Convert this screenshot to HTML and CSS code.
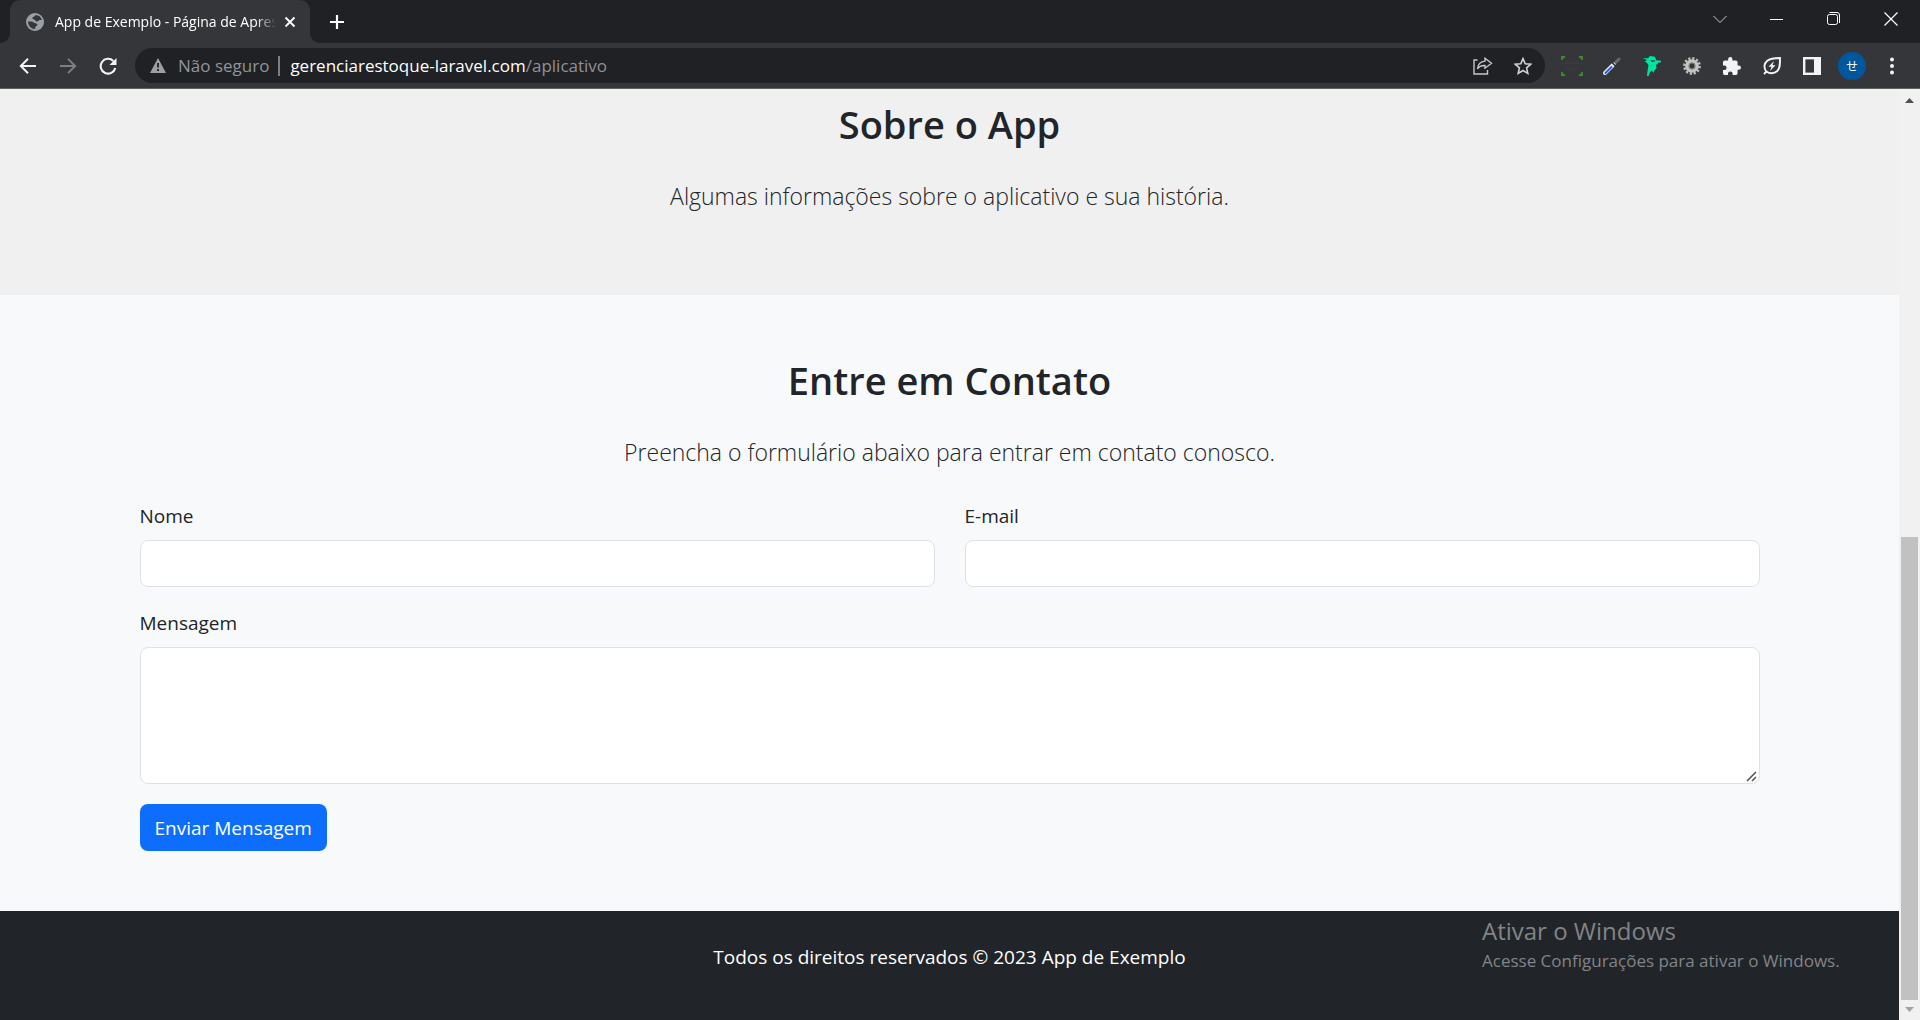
FILE: index.html
```html
<!DOCTYPE html>
<html lang="pt-BR">
<head>
<meta charset="utf-8">
<meta name="viewport" content="width=device-width, initial-scale=1">
<title>App de Exemplo - Página de Apresentação</title>
<link rel="stylesheet" href="styles.css">
</head>
<body>
<div class="window">
  <header class="chrome">
    <div class="tabstrip">
      <div class="tab">
        <svg class="favicon" width="18" height="18" viewBox="0 0 18 18"><circle cx="9" cy="9" r="9" fill="#9aa0a6"/><path d="M9.500 2c-.5 2-3 1.500-3 3.200 0 1.800 2.500.8 3 2.300.4 1.300 2.500 1.200 3 .2.300-.7 1.200-.7 3.400-.7A7 7 0 0 0 9.500 2zM2 8.500c2.500-.3 5 .2 6.200 1.300 1 1 3.300.6 3.300 2 0 1.300-1.500 1-2 2-.3.800 0 1.500-.5 2.200A7 7 0 0 1 2 8.500z" fill="#35363a"/></svg>
        <span class="tab-title">App de Exemplo - Página de Apresentação</span>
        <button class="icon-btn tab-close" aria-label="Fechar guia"><svg width="12" height="12" viewBox="0 0 12 12"><path d="M1.500 1.500l9 9M10.500 1.500l-9 9" stroke="#fff" stroke-width="1.900"/></svg></button>
      </div>
      <button class="icon-btn new-tab" aria-label="Nova guia"><svg width="16" height="16" viewBox="0 0 16 16"><path d="M8 1v14M1 8h14" stroke="#fff" stroke-width="2.200"/></svg></button>
      <div class="window-controls">
        <button class="icon-btn" aria-label="Pesquisar guias"><svg width="14" height="14" viewBox="0 0 14 14"><path d="M.5 4L7 10.500 13.500 4" fill="none" stroke="#ccc" stroke-width="1"/></svg></button>
        <button class="icon-btn" aria-label="Minimizar"><svg width="14" height="14" viewBox="0 0 14 14"><path d="M0 7.500h13" stroke="#fff" stroke-width="1"/></svg></button>
        <button class="icon-btn" aria-label="Restaurar"><svg width="14" height="14" viewBox="0 0 14 14" fill="none" stroke="#fff"><rect x=".5" y="2.500" width="10" height="10" rx="2"/><path d="M2.500.5H10A2.500 2.500 0 0 1 12.500 3v8"/></svg></button>
        <button class="icon-btn" aria-label="Fechar"><svg width="14" height="14" viewBox="0 0 14 14"><path d="M.5.5l13 13M13.500.5l-13 13" stroke="#fff" stroke-width="1.200"/></svg></button>
      </div>
    </div>
    <div class="toolbar">
      <div class="nav">
        <button class="icon-btn" aria-label="Voltar"><svg width="18" height="18" viewBox="0 0 18 18"><path d="M17 9H2M9 1.800L1.800 9 9 16.200" fill="none" stroke="#f1f3f4" stroke-width="2"/></svg></button>
        <button class="icon-btn" aria-label="Avançar"><svg width="18" height="18" viewBox="0 0 18 18"><path d="M1 9h15M9 1.800L16.200 9 9 16.200" fill="none" stroke="#7e8084" stroke-width="1.800"/></svg></button>
        <button class="icon-btn" aria-label="Recarregar"><svg width="18" height="18" viewBox="0 0 18 18"><path d="M16.300 11A7.400 7.400 0 1 1 14.300 3.900" fill="none" stroke="#f1f3f4" stroke-width="2.100"/><path d="M17.500 1v7h-7z" fill="#f1f3f4"/></svg></button>
      </div>
      <div class="address">
        <svg class="warn" width="16" height="15" viewBox="0 0 16 15"><path d="M8 0l8 15H0z" fill="#9aa0a6"/><path d="M8 5v4.500M8 11v2" stroke="#202124" stroke-width="1.800"/></svg>
        <span class="security">Não seguro</span>
        <span class="sep"></span>
        <span class="url" role="textbox" contenteditable="true" spellcheck="false" aria-label="Barra de endereço">gerenciarestoque-laravel.com<span class="path">/aplicativo</span></span>
        <button class="icon-btn" aria-label="Compartilhar"><svg width="20" height="18" viewBox="0 0 20 18" fill="none" stroke="#c4c6c9" stroke-width="1.400"><path d="M4.500 3H1v14h13.500v-4"/><path d="M12 1.200l6.500 5-6.500 5V8.500c-3.500-.1-6 .8-7.500 3.300.4-4.500 3-7.300 7.500-7.700z"/></svg></button>
        <button class="icon-btn" aria-label="Favoritar"><svg width="18" height="18" viewBox="0 0 18 18"><path d="M9 1.600l2.200 5.100 5.600.5-4.200 3.700 1.200 5.500L9 13.500l-4.800 2.900 1.200-5.500L1.200 7.200l5.600-.5z" fill="none" stroke="#d0d2d5" stroke-width="1.600"/></svg></button>
      </div>
      <div class="extensions">
        <button class="icon-btn" aria-label="Captura de tela"><svg width="22" height="20" viewBox="0 0 22 20" fill="none"><path d="M4 7h14M4 13h14" stroke="#3d3e40"/><path d="M1 4V1h3M18 1h3v3M21 16v3h-3M4 19H1v-3" stroke="#3b8f28" stroke-width="1.800"/></svg></button>
        <button class="icon-btn" aria-label="Conta-gotas"><svg width="18" height="18" viewBox="0 0 18 18" stroke-linecap="round"><path d="M10 8l6-6" stroke="#6b6763" stroke-width="3"/><path d="M2 16l8.500-8.500" stroke="#e4e7f2" stroke-width="4"/><path d="M2.500 16l6-6" stroke="#2f5fd0" stroke-width="2"/><path d="M9 5.500l3.500 3.500" stroke="#2a2a2c" stroke-width="1.500"/></svg></button>
        <button class="icon-btn" aria-label="Extensão ninja"><svg width="18" height="20" viewBox="0 0 18 20"><path d="M0 2l5 .2L7 0l5 .8 1.200 3.500 4.800.5v1.500l-3 .5-.5 2-1.500-.5.5 4-2.300 2.400L10.500 17 9 14.500 7 16l-1.500 4H4l.5-5 1-6L3 6l-1.500-.5L4 4z" fill="#00e5a0"/><path d="M7.500 4.500l4.500-.3v1.300l-3.500.3z" fill="#35363a"/></svg></button>
        <button class="icon-btn" aria-label="Extensão engrenagem"><svg width="18" height="18" viewBox="0 0 18 18" fill="none"><circle cx="9" cy="9" r="7.600" stroke="#bdbdbb" stroke-width="2.600" stroke-dasharray="2.200 1.780"/><circle cx="9" cy="9" r="5" stroke="#c4c4c2" stroke-width="3.600"/><circle cx="9" cy="9" r="3" stroke="#85827f" stroke-width="1.200"/></svg></button>
        <button class="icon-btn" aria-label="Extensões"><svg width="18" height="18" viewBox="2 1 21 21"><path d="M20.500 11H19V7a2 2 0 0 0-2-2h-4V3.500a2.500 2.500 0 0 0-5 0V5H4a2 2 0 0 0-2 2v3.800h1.500a2.700 2.700 0 0 1 0 5.400H2V20a2 2 0 0 0 2 2h3.800v-1.500a2.700 2.700 0 0 1 5.400 0V22H17a2 2 0 0 0 2-2v-4h1.500a2.500 2.500 0 0 0 0-5z" fill="#f1f3f4"/></svg></button>
        <button class="icon-btn" aria-label="Economia de energia"><svg width="18" height="18" viewBox="0 0 18 18"><path d="M1 17l2.300-2.500C.5 11 1 6.500 4 4c3-2.500 7-3 13-3 0 6 .3 10.500-3 13.300-3 2.500-7.500 2.500-10.500.2" fill="none" stroke="#f1f3f4" stroke-width="1.900"/><path d="M11 4L5.500 9.800h3L7 14l5.500-5.800h-3z" fill="#f1f3f4"/></svg></button>
        <button class="icon-btn" aria-label="Painel lateral"><svg width="18" height="18" viewBox="0 0 18 18"><rect x="1.200" y="1.200" width="15.600" height="15.600" fill="none" stroke="#f1f3f4" stroke-width="2.400"/><path d="M11 1h6v16h-6z" fill="#f1f3f4"/></svg></button>
        <button class="icon-btn avatar" aria-label="Perfil">せ</button>
        <button class="icon-btn" aria-label="Menu"><svg width="18" height="18" viewBox="0 0 18 18" fill="#f1f3f4"><circle cx="9" cy="2.500" r="2"/><circle cx="9" cy="9" r="2"/><circle cx="9" cy="15.500" r="2"/></svg></button>
      </div>
    </div>
  </header>

  <div class="viewport">
    <div class="page">
      <section class="about">
        <h2>Sobre o App</h2>
        <p class="lead">Algumas informações sobre o aplicativo e sua história.</p>
      </section>
      <section class="contact">
        <h2>Entre em Contato</h2>
        <p class="lead">Preencha o formulário abaixo para entrar em contato conosco.</p>
        <form class="form">
          <div class="field"><label for="nome">Nome</label><input id="nome" type="text"></div>
          <div class="field"><label for="email">E-mail</label><input id="email" type="email"></div>
          <div class="field wide"><label for="mensagem">Mensagem</label><textarea id="mensagem"></textarea></div>
          <button class="submit" type="submit">Enviar Mensagem</button>
        </form>
      </section>
      <footer class="footer">
        <p>Todos os direitos reservados © 2023 App de Exemplo</p>
      </footer>
    </div>
    <div class="scrollbar">
      <svg width="21" height="21" viewBox="0 0 21 21"><path d="M6 14l4.500-5 4.500 5z" fill="#505050"/></svg>
      <div class="track"><div class="thumb"></div></div>
      <svg width="21" height="20" viewBox="0 0 21 20"><path d="M6 7l4.500 5L15 7z" fill="#a3a3a3"/></svg>
    </div>
  </div>

  <aside class="activation">
    <p class="activation-title">Ativar o Windows</p>
    <p>Acesse Configurações para ativar o Windows.</p>
  </aside>
</div>
</body>
</html>
```
FILE: styles.css
```css
* { box-sizing: border-box; }

body {
  margin: 0;
  background: #212529;
  color: #212529;
  font-family: "Open Sans", "Noto Sans", sans-serif;
  font-size: 19px;
  line-height: 30px;
}

h2, p { margin: 0; }

.window {
  position: relative;
  display: flex;
  flex-direction: column;
  min-height: 100vh;
}

.icon-btn {
  display: flex;
  align-items: center;
  justify-content: center;
  flex: none;
  padding: 0;
  border: 0;
  background: none;
  color: #fff;
}

/* Browser frame */
.chrome {
  background: #35363a;
  border-bottom: 1px solid #5f6164;
}

.tabstrip {
  display: flex;
  height: 43px;
  padding: 0 1px 0 10px;
  background: #202124;
}

.tab {
  position: relative;
  display: flex;
  align-items: center;
  width: 300px;
  padding: 0 14px 0 16px;
  border-radius: 10px 10px 0 0;
  background: #35363a;
}

/* Flared feet joining the tab to the toolbar */
.tab::before,
.tab::after {
  content: "";
  position: absolute;
  bottom: 0;
  width: 10px;
  height: 10px;
}

.tab::before {
  right: 100%;
  background: radial-gradient(circle at 0 0, #202124 10px, #35363a 10px);
}

.tab::after {
  left: 100%;
  background: radial-gradient(circle at 100% 0, #202124 10px, #35363a 10px);
}

.favicon { flex: none; }

.tab-title {
  flex: 1;
  margin: 0 8px 0 11px;
  overflow: hidden;
  color: #fff;
  font-size: 14px;
  line-height: 20px;
  white-space: nowrap;
  mask-image: linear-gradient(to right, #000 calc(100% - 20px), transparent);
}

.new-tab { width: 54px; }

.window-controls {
  display: flex;
  height: 37px;
  margin-left: auto;
}

.window-controls .icon-btn { width: 57px; }

.toolbar {
  display: flex;
  align-items: center;
  height: 45px;
  padding: 0 8px;
}

.nav { display: flex; }
.nav .icon-btn { width: 40px; height: 34px; }

.address {
  display: flex;
  flex: 1;
  align-items: center;
  height: 35px;
  margin: 0 7px;
  padding: 0 2px 0 15px;
  border-radius: 18px;
  background: #202124;
  font-size: 17px;
}

.security { margin-left: 12px; color: #8f959b; }

.sep {
  width: 2px;
  height: 20px;
  margin: 0 10px 0 9px;
  background: #7c7f83;
}

.url { flex: 1; color: #fff; white-space: nowrap; }
.path { color: #8f9296; }
.address .icon-btn { width: 40px; height: 34px; }

.extensions { display: flex; align-items: center; }
.extensions .icon-btn { width: 40px; height: 34px; }

.extensions .avatar {
  width: 28px;
  height: 28px;
  margin: 0 6px;
  border-radius: 50%;
  background: #00579c;
  font-family: "Noto Sans CJK JP", sans-serif;
  font-size: 12px;
  line-height: 28px;
}

/* Page and scrollbar */
.viewport { display: flex; flex: 1; }

.page { flex: 1; min-width: 0; text-align: center; }

h2 {
  margin-bottom: 30px;
  font-size: 38px;
  font-weight: 600;
  line-height: 48px;
}

.lead {
  font-size: 23px;
  font-weight: 300;
  line-height: 37px;
}

.about {
  padding: 11px 15px 80px;
  background: #f0f0f0;
}

.contact {
  padding: 61px 15px 60px;
  background: #f8f9fa;
}

.form {
  display: grid;
  grid-template-columns: 1fr 1fr;
  gap: 20px 30px;
  max-width: 1620px;
  margin: 29px auto 0;
  text-align: left;
}

.field {
  display: flex;
  flex-direction: column;
  gap: 9px;
  padding-top: 1px;
}

.wide { grid-column: 1 / -1; }

input,
textarea {
  width: 100%;
  height: 47px;
  padding: 7px 15px;
  border: 1px solid #dee2e6;
  border-radius: 8px;
  background: #fff;
  color: inherit;
  font: inherit;
}

textarea { height: 137px; resize: vertical; }

textarea::-webkit-resizer {
  background: url("data:image/svg+xml,%3Csvg xmlns='http://www.w3.org/2000/svg' width='15' height='15'%3E%3Cpath d='M3 13l9-9M8 13l4-4' stroke='%23505050' stroke-width='1.500'/%3E%3C/svg%3E") no-repeat;
}

.submit {
  justify-self: start;
  height: 47px;
  padding: 1px 15px 0;
  border: 0;
  border-radius: 8px;
  background: #0d6efd;
  color: #fff;
  font: inherit;
}

.footer {
  padding: 31px 15px 47px;
  background: #212529;
  color: #fff;
}

.scrollbar {
  display: flex;
  flex-direction: column;
  width: 21px;
  background: #f1f1f1;
}

.track {
  display: flex;
  flex: 1;
  flex-direction: column;
  justify-content: flex-end;
  padding: 0 2px;
}

.thumb { height: 52%; background: #c1c1c1; }

/* System notice floating over the window */
.activation {
  position: absolute;
  right: 79px;
  bottom: 46px;
  width: 359px;
  color: #828487;
  font-size: 17px;
  line-height: 26px;
  white-space: nowrap;
}

.activation-title { font-size: 24px; line-height: 34px; }
```
